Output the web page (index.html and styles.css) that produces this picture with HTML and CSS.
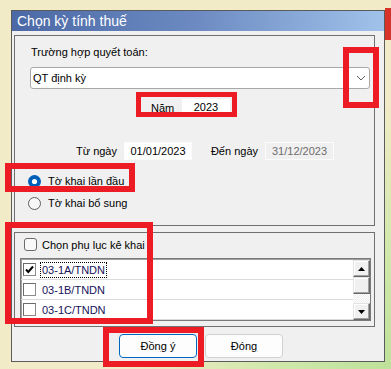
FILE: index.html
```html
<!DOCTYPE html>
<html lang="vi">
<head>
  <meta charset="UTF-8">
  <title>Chọn kỳ tính thuế</title>
  <link rel="stylesheet" href="styles.css">
</head>
<body>
  <div class="dialog">
    <div class="titlebar">Chọn kỳ tính thuế</div>

    <div class="dlg-body">
      <div class="group group-main">
        <div class="lbl">Trường hợp quyết toán:</div>
        <div class="combo">
          <span>QT định kỳ</span>
          <svg class="chevron" width="10" height="6" viewBox="0 0 10 6">
            <path d="M1 1 L5 5 L9 1" fill="none" stroke="#5f5f5f" stroke-width="1"/>
          </svg>
        </div>

        <div class="year-row">
          <span class="year-lbl">Năm</span>
          <div class="field field-year">2023</div>
        </div>

        <div class="date-row">
          <span class="date-lbl date-from">Từ ngày</span>
          <div class="field field-date">01/01/2023</div>
          <span class="date-lbl date-to">Đến ngày</span>
          <div class="field field-date disabled">31/12/2023</div>
        </div>

        <div class="radio radio-first">
          <svg width="13" height="13" viewBox="0 0 13 13">
            <circle cx="6.5" cy="6.5" r="6.5" fill="#005fb8"/>
            <circle cx="6.5" cy="6.5" r="2.6" fill="#fff"/>
          </svg>
          <span>Tờ khai lần đầu</span>
        </div>
        <div class="radio">
          <svg width="13" height="13" viewBox="0 0 13 13">
            <circle cx="6.5" cy="6.5" r="6" fill="#f7f7f7" stroke="#5f5f5f" stroke-width="1"/>
          </svg>
          <span>Tờ khai bổ sung</span>
        </div>
      </div>

      <div class="group group-appendix">
        <div class="chk-head">
          <span class="chk"></span>
          <span>Chọn phụ lục kê khai</span>
        </div>

        <div class="listbox">
          <div class="rows">
            <div class="row">
              <span class="cb">
                <svg width="11" height="11" viewBox="0 0 11 11">
                  <path d="M2 5.5 L4.3 8 L9 2.5" fill="none" stroke="#000" stroke-width="2"/>
                </svg>
              </span>
              <span class="item focus">03-1A/TNDN</span>
            </div>
            <div class="row">
              <span class="cb"></span>
              <span class="item">03-1B/TNDN</span>
            </div>
            <div class="row">
              <span class="cb"></span>
              <span class="item">03-1C/TNDN</span>
            </div>
          </div>
          <div class="scrollbar">
            <div class="sb-btn">
              <svg width="7" height="4" viewBox="0 0 7 4"><polygon points="0,4 7,4 3.5,0" fill="#000"/></svg>
            </div>
            <div class="sb-thumb"></div>
            <div class="sb-track"></div>
            <div class="sb-btn">
              <svg width="7" height="4" viewBox="0 0 7 4"><polygon points="0,0 7,0 3.5,4" fill="#000"/></svg>
            </div>
          </div>
        </div>
      </div>

      <div class="buttons">
        <button class="btn btn-default">Đồn<u>g</u> ý</button>
        <button class="btn">Đón<u>g</u></button>
      </div>
    </div>
  </div>

  <!-- red annotation frames drawn over the dialog -->
  <div class="mark mark-combo"></div>
  <div class="mark mark-year"></div>
  <div class="mark mark-radio"></div>
  <div class="mark mark-appendix"></div>
  <div class="mark mark-ok"></div>
</body>
</html>
```

FILE: styles.css
```css
body {
  position: relative;
  margin: 0;
  padding: 10px 0 0 11px;
  width: 391px;
  height: 369px;
  box-sizing: border-box;
  overflow: hidden;
  font-family: "Liberation Sans", Arial, sans-serif;
  font-size: 11px;
  color: #000;
  background-color: #f2ebc8;
  background-image:
    linear-gradient(#d8332a, #d8332a),
    radial-gradient(circle at 100% 100%, #bde19a 0, #cfe8aa 110px, rgba(242, 235, 200, 0) 270px);
  background-repeat: no-repeat;
  background-position: 385px 8px, 0 0;
  background-size: 6px 32px, 100% 100%;
}

.dialog {
  width: 374px;
  height: 352px;
  box-sizing: border-box;
  border: 1px solid #5b5b5b;
  background-color: #f0f0f0;
}

.titlebar {
  height: 20px;
  line-height: 20px;
  padding-left: 5px;
  font-size: 14px;
  color: #fff;
  background: linear-gradient(to right, #4a69a6, #6d8bc2 50%, #a0c2ea);
}

.dlg-body {
  padding: 4px 0 0 2px;
}

.group {
  width: 361px;
  box-sizing: border-box;
  border: 1px solid #707070;
}

.group-main {
  height: 191px;
}

.lbl {
  margin: 9px 0 0 16px;
  height: 14px;
  line-height: 14px;
}

.combo {
  display: flex;
  align-items: center;
  justify-content: space-between;
  margin: 8px 0 0 15px;
  width: 340px;
  height: 22px;
  box-sizing: border-box;
  padding-left: 2px;
  border: 1px solid #a8a8a8;
  border-radius: 3px;
  background-color: #fff;
}

.chevron {
  margin-right: 3px;
}

.year-row {
  display: flex;
  align-items: center;
  margin: 10px 0 0 136px;
  height: 17px;
}

.year-lbl {
  width: 31px;
}

.field {
  height: 100%;
  line-height: 17px;
  box-sizing: border-box;
  background-color: #fff;
  text-align: center;
}

.field-year {
  width: 48px;
}

.date-row {
  display: flex;
  align-items: center;
  margin-top: 26px;
  height: 18px;
}

.date-lbl {
  text-align: right;
}

.date-from {
  width: 102px;
}

.date-to {
  width: 66px;
}

.field-date {
  margin-left: 7px;
  width: 68px;
  border: 1px solid #fbfbfb;
  line-height: 16px;
}

.field-date.disabled {
  width: 69px;
  background-color: #f0f0f0;
  color: #6d6d6d;
}

.radio {
  display: flex;
  align-items: center;
  height: 22px;
  padding-left: 13px;
}

.radio-first {
  margin-top: 10px;
}

.radio span {
  margin-left: 7px;
}

.group-appendix {
  margin-top: 6px;
  height: 95px;
}

.chk-head {
  display: flex;
  align-items: center;
  margin: 3px 0 0 9px;
  height: 17px;
}

.chk {
  width: 13px;
  height: 13px;
  box-sizing: border-box;
  border: 1px solid #6b6b6b;
  border-radius: 3px;
  background-color: #f9f9f9;
  margin-right: 5px;
}

.listbox {
  display: flex;
  margin: 5px 0 0 5px;
  width: 351px;
  height: 63px;
  box-sizing: border-box;
  border: 1px solid #7a7a7a;
  box-shadow: inset 1px 1px 0 #a0a0a0;
  background-color: #fff;
}

.rows {
  flex: 1;
  padding-top: 1px;
}

.row {
  display: flex;
  align-items: center;
  height: 20px;
  box-sizing: border-box;
  padding-left: 2px;
  border-bottom: 1px solid #dadada;
}

.cb {
  display: flex;
  align-items: center;
  justify-content: center;
  width: 13px;
  height: 13px;
  box-sizing: border-box;
  border: 1px solid #8a8a8a;
  border-top-color: #6a6a6a;
  border-left-color: #6a6a6a;
  background-color: #fff;
}

.item {
  margin-left: 4px;
  padding: 0 1px;
  line-height: 14px;
  border: 1px solid transparent;
  color: #16125a;
}

.item.focus {
  border: 1px dotted #000;
}

.scrollbar {
  display: flex;
  flex-direction: column;
  width: 17px;
  margin-top: 1px;
}

.sb-btn,
.sb-thumb {
  display: flex;
  align-items: center;
  justify-content: center;
  height: 17px;
  box-sizing: border-box;
  border: 1px solid;
  border-color: #e3e3e3 #696969 #696969 #e3e3e3;
  box-shadow: inset -1px -1px 0 #a0a0a0, inset 1px 1px 0 #fff;
  background-color: #f0f0f0;
}

.sb-track {
  flex: 1;
  background-color: #fff;
  background-image: repeating-conic-gradient(#ececec 0 25%, #fff 0 50%);
  background-size: 2px 2px;
}

.buttons {
  display: flex;
  gap: 8px;
  margin-top: 7px;
  padding-left: 105px;
}

.btn {
  width: 78px;
  height: 24px;
  padding: 0;
  font-family: inherit;
  font-size: 11px;
  color: #000;
  border: 1px solid #d0d0d0;
  border-radius: 4px;
  background-color: #fdfdfd;
}

.btn-default {
  border-color: #0067c0;
}

.mark {
  position: absolute;
  box-sizing: border-box;
  border: 6px solid #ed1c24;
}

.mark-combo {
  left: 343px;
  top: 47px;
  width: 36px;
  height: 61px;
}

.mark-year {
  left: 136px;
  top: 92px;
  width: 101px;
  height: 25px;
  border-width: 5px;
}

.mark-radio {
  left: 5px;
  top: 163px;
  width: 130px;
  height: 29px;
}

.mark-appendix {
  left: 5px;
  top: 222px;
  width: 148px;
  height: 102px;
}

.mark-ok {
  left: 103px;
  top: 327px;
  width: 101px;
  height: 40px;
}
```
